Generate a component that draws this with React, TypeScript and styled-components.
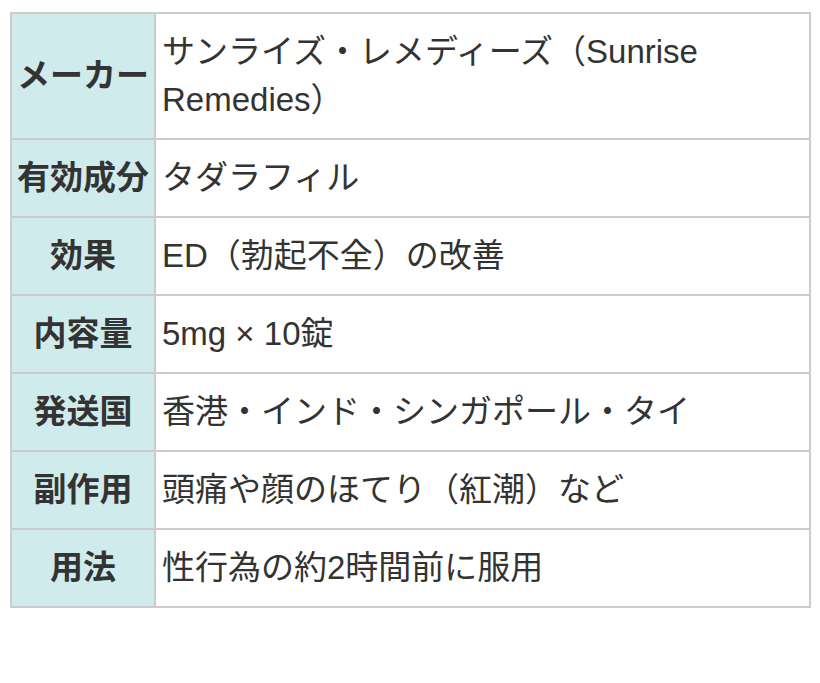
import styled, { createGlobalStyle } from "styled-components";

const GlobalStyle = createGlobalStyle`
  body {
    margin: 0;
    background: #fff;
    font-family: "Liberation Sans", Arial, "Noto Sans CJK JP", sans-serif;
    color: #333;
  }
`;

const Wrapper = styled.div`
  padding: 12px 9px 12px 10px;
`;

const SpecTable = styled.table`
  width: 100%;
  border-collapse: collapse;
  border: 2px solid #cccccc;
  font-size: 33px;
  line-height: 48px;
`;

const HeadCell = styled.th`
  width: 132px;
  padding: 14px 5px;
  background: #d0ebeb;
  border: 2px solid #cccccc;
  font-weight: bold;
  text-align: center;
  white-space: nowrap;
  color: #333;
`;

const ValueCell = styled.td`
  padding: 14px 6px;
  border: 2px solid #cccccc;
  text-align: left;
`;

const rows: [string, string][] = [
  ["メーカー", "サンライズ・レメディーズ（Sunrise Remedies）"],
  ["有効成分", "タダラフィル"],
  ["効果", "ED（勃起不全）の改善"],
  ["内容量", "5mg × 10錠"],
  ["発送国", "香港・インド・シンガポール・タイ"],
  ["副作用", "頭痛や顔のほてり（紅潮）など"],
  ["用法", "性行為の約2時間前に服用"],
];

const App = () => {
  return (
    <>
      <GlobalStyle />
      <Wrapper>
        <SpecTable>
          <tbody>
            {rows.map(([label, value]) => (
              <tr key={label}>
                <HeadCell>{label}</HeadCell>
                <ValueCell>{value}</ValueCell>
              </tr>
            ))}
          </tbody>
        </SpecTable>
      </Wrapper>
    </>
  );
};

export default App;
